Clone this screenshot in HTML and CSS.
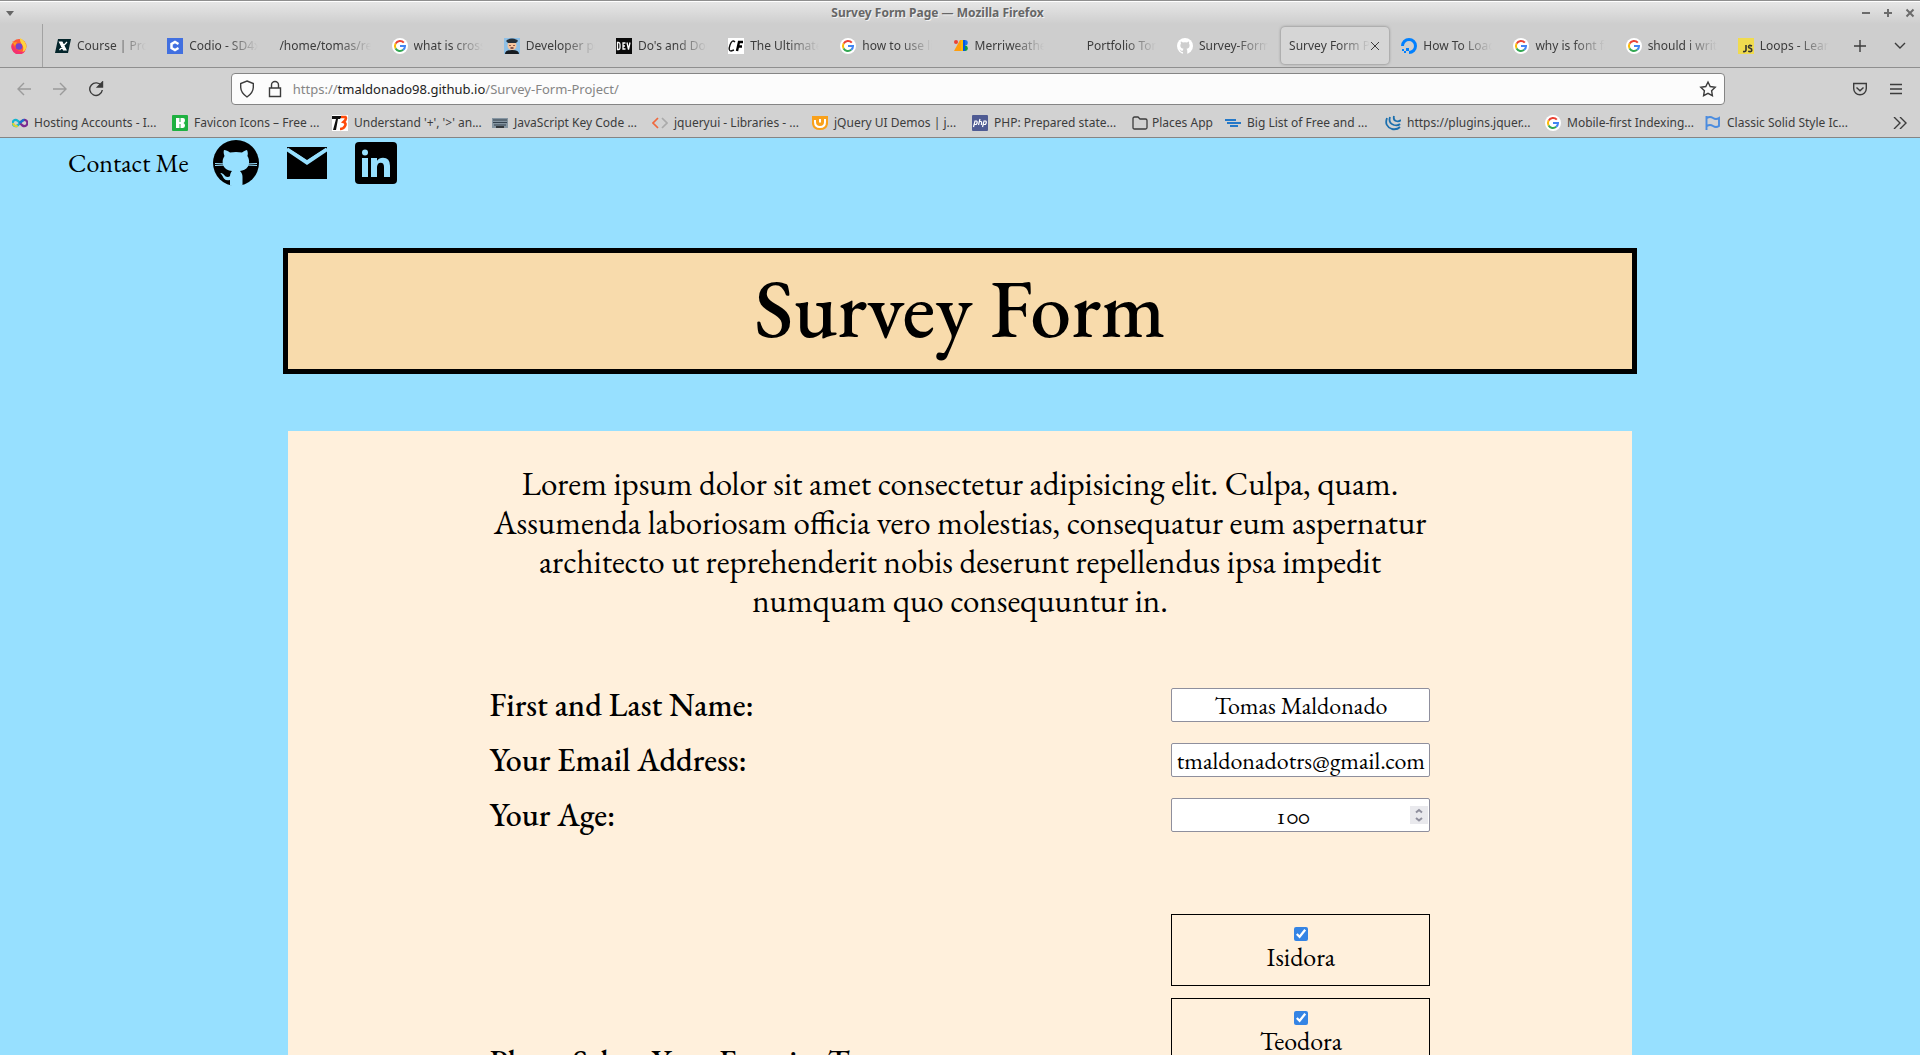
FILE: index.html
```html
<!DOCTYPE html>
<html lang="en">
<head>
<meta charset="utf-8">
<title>Survey Form Page</title>
<link rel="stylesheet" href="styles.css">
</head>
<body>
<svg class="defs" width="0" height="0" aria-hidden="true">
  <symbol id="google" viewBox="0 0 16 16"><circle cx="8" cy="8" r="8" fill="#fff"/><g fill="none" stroke-width="2"><path d="M11.8 4.7A5 5 0 0 0 3.6 5.6" stroke="#ea4335"/><path d="M3.6 5.6a5 5 0 0 0 0 4.9" stroke="#fbbc05"/><path d="M3.6 10.5a5 5 0 0 0 7.6 1.3" stroke="#34a853"/><path d="M8 8.1h5a5 5 0 0 1-1.8 3.7" stroke="#4285f4"/></g></symbol>
  <symbol id="cat" viewBox="0 0 46 46"><path d="M11 10c2 0 4 1 6 2.600q6-1.300 12 0c2-1.600 4-2.600 5-2.600q1.400 3 .4 6c2 3 2.300 7 .6 10.500-2 3-5 4-8 4.500 2 2 2.500 4 2.500 6v8.500q-6 2-12.500 0V40c-5 1-6-1-7.500-4-.8-1.500-1.800-2-2-3 3-.5 4 4 7 4q2 0 2.500-1c.2-2 .8-4 2-5-4-.5-7-2-8.500-5-1.500-3.500-1-7 1-10q-1.400-3-.5-6z"/></symbol>
</svg>
<header class="browser">
  <div class="titlebar">
    <span class="window-menu"></span>
    <span class="window-title">Survey Form Page — Mozilla Firefox</span>
    <span class="window-buttons">
      <button aria-label="Minimize"><svg width="10" height="10"><path d="M1 5h8"/></svg></button>
      <button aria-label="Maximize"><svg width="10" height="10"><path d="M1 5h8M5 1v8"/></svg></button>
      <button aria-label="Close"><svg width="10" height="10"><path d="M1.500 1.500l7 7M8.500 1.500l-7 7"/></svg></button>
    </span>
  </div>
  <div class="tabbar">
    <button class="pinned" aria-label="Firefox View"><svg width="16" height="16" viewBox="0 0 16 16"><circle cx="8" cy="8.500" r="7.500" fill="#ff5a36"/><path d="M1 6a7.500 7.500 0 0 0 13.500 6.500Q8 17 1 6z" fill="#f5316f"/><path d="M9 0q6 3 6.500 9-1 4-4 5 2-5-1-8-2-3-1.500-6z" fill="#ffd43c"/><path d="M1 3l2 1.500L6 4 4 8z" fill="#ff9a24"/><circle cx="8" cy="8.500" r="3.300" fill="#7442cf"/></svg></button>
    <nav class="tabs">
      <button class="tab"><svg class="icon" viewBox="0 0 16 16"><path d="M3 1h13l-3 14H0z" fill="#04252b"/><path d="M4.500 4H7l4 8H8.500zM12 4L4.500 12" fill="#fff" stroke="#fff" stroke-width="1.200"/></svg><span>Course | Proje</span></button>
      <button class="tab"><svg class="icon" viewBox="0 0 16 16"><path d="M0 0h16v16H0z" fill="#4270e0"/><path d="M11.500 6L8 4 4.500 6v4L8 12l3.500-2" fill="none" stroke="#fff" stroke-width="2.500"/></svg><span>Codio - SD4x</span></button>
      <button class="tab"><span>/home/tomas/repos</span></button>
      <button class="tab"><svg class="icon"><use href="#google"/></svg><span>what is cross</span></button>
      <button class="tab"><svg class="icon" viewBox="0 0 16 16"><path d="M0 0h16v16H0z" fill="#8fc0e6"/><circle cx="8" cy="7.500" r="4.500" fill="#f5c59d"/><path d="M2 3q1-2 6-2.500Q13 1 14 3l-2 2H4z" fill="#25303a"/><path d="M1 16q0-4 7-4t7 4z" fill="#161b20"/><path d="M6 7v1M10 7v1M6.500 10h3" stroke="#633"/></svg><span>Developer portf</span></button>
      <button class="tab"><svg class="icon" viewBox="0 0 16 16"><path d="M0 0h16v16H0z" fill="#0a0a0a"/><path d="M1.500 4.500v7h1q1.500 0 1.500-2v-3q0-2-1.500-2zM9.500 5H7v6h2.500M7 8h2M11 4.500l1.500 7 1.500-7" fill="none" stroke="#fff" stroke-width="1.300"/></svg><span>Do's and Don'ts</span></button>
      <button class="tab"><svg class="icon" viewBox="0 0 16 16"><path d="M0 0h16v16H0z" fill="#fff"/><path d="M7 4Q4 1 2 7t1 6l3-1" fill="none" stroke="#111"/><path d="M9 13l2-9h4M10 8.500h4" fill="none" stroke="#000" stroke-width="2.400"/></svg><span>The Ultimate G</span></button>
      <button class="tab"><svg class="icon"><use href="#google"/></svg><span>how to use link</span></button>
      <button class="tab"><svg class="icon" viewBox="0 0 16 16"><circle cx="3" cy="4" r="2" fill="#ea4335"/><path d="M7 2h3v11H1z" fill="#ff9e0d"/><path d="M8 2h2v11H8z" fill="#fbbc05"/><path d="M10 2h2v11h-2z" fill="#0057e5"/><path d="M12 2a2.700 2.700 0 0 1 0 5.500z" fill="#1a73e8"/><path d="M12 7.500a2.700 2.700 0 0 1 0 5.500z" fill="#0a9b42"/></svg><span>Merriweather</span></button>
      <button class="tab"><svg class="icon" viewBox="0 0 16 16"></svg><span>Portfolio Tomas</span></button>
      <button class="tab"><svg class="icon" viewBox="0 0 46 46"><circle cx="23" cy="23" r="23" fill="#fff"/><use href="#cat" fill="#cecece"/></svg><span>Survey-Form-P</span></button>
      <button class="tab active"><span>Survey Form Page</span><svg class="close" width="10" height="10"><path d="M1 1l8 8M9 1L1 9"/></svg></button>
      <button class="tab"><svg class="icon" viewBox="0 0 16 16"><path d="M8 14.500A6.500 6.500 0 1 0 1.500 8" fill="none" stroke="#0080ff" stroke-width="3"/><path d="M5 10h3v3H5zM3 13h2v2H3zM1 11h2v2H1z" fill="#0080ff"/></svg><span>How To Load C</span></button>
      <button class="tab"><svg class="icon"><use href="#google"/></svg><span>why is font fam</span></button>
      <button class="tab"><svg class="icon"><use href="#google"/></svg><span>should i write</span></button>
      <button class="tab"><svg class="icon" viewBox="0 0 16 16"><path d="M0 0h16v16H0z" fill="#f0db4f"/><path d="M8 7v5q0 2-3 1.500M14 8q-3.500-1.500-3.500.7 0 1.300 1.700 1.600 1.800.4 1.600 2-.4 2-3.600.9" fill="none" stroke="#323330" stroke-width="1.600"/></svg><span>Loops - Learn J</span></button>
    </nav>
    <button class="tab-tool" aria-label="New tab"><svg width="12" height="12"><path d="M6 0v12M0 6h12"/></svg></button>
    <button class="tab-tool" aria-label="List all tabs"><svg width="12" height="8"><path d="M1 1l5 5 5-5"/></svg></button>
  </div>
  <div class="navbar">
    <button class="tool dim" aria-label="Back"><svg width="16" height="16"><path d="M15 8H2M8 2L2 8l6 6"/></svg></button>
    <button class="tool dim" aria-label="Forward"><svg width="16" height="16"><path d="M1 8h13M8 2l6 6-6 6"/></svg></button>
    <button class="tool" aria-label="Reload"><svg width="16" height="16"><path d="M13.500 5A6.300 6.300 0 1 0 14.300 9"/><path d="M14.500 1v5h-5z" fill="#3c3c3c"/></svg></button>
    <span class="spacer"></span>
    <div class="urlbar">
      <svg width="16" height="18"><path d="M8 1l6.300 2.500v4Q14 13 8 17 2 13 1.700 7.500v-4z"/></svg>
      <svg width="14" height="18"><path d="M1.500 8h11v8.500h-11zM3.500 8V5a3.500 3.500 0 0 1 7 0v3"/></svg>
      <span class="url">https://<b>tmaldonado98.github.io</b>/Survey-Form-Project/</span>
      <svg width="18" height="18"><path d="M9 2l2.200 4.500 5 .7-3.600 3.500.8 5L9 13.300l-4.400 2.400.8-5L1.800 7.200l5-.7z"/></svg>
    </div>
    <span class="spacer"></span>
    <button class="tool" aria-label="Save to Pocket"><svg width="16" height="16"><path d="M1.700 2.500h12.600v5a6.300 6.300 0 0 1-12.600 0zM4.500 6.500L8 9.800l3.500-3.300"/></svg></button>
    <button class="tool" aria-label="Menu"><svg width="12" height="12"><path d="M0 1.500h12M0 6h12M0 10.500h12"/></svg></button>
  </div>
  <nav class="bookmarks">
    <a href="#"><svg class="icon" viewBox="0 0 16 16"><g fill="none" stroke-width="2.200"><path d="M8 8Q5.500 4.800 3.800 4.800A3 3 0 0 0 3.800 11.200Q5.500 11.200 8 8" stroke="#12b5cf"/><path d="M1.200 8a3 3 0 0 0 4.500 2.700" stroke="#d9d534"/><path d="M8 8q2.500-3.200 4.200-3.200a3 3 0 0 1 0 6.400Q10.500 11.200 8 8" stroke="#7b2b91"/><path d="M8 8q2.500-3.200 4.200-3.200" stroke="#1575cf"/></g></svg><span>Hosting Accounts - I...</span></a>
    <a href="#"><svg class="icon" viewBox="0 0 16 16"><rect width="16" height="16" rx="1" fill="#1fb141"/><path d="M4 3h3.500v10H4zM8.500 3H11q2 0 2 2.200T11.500 8q1.500.5 1.500 2.500t-2 2.500H8.500V9H7V7h1.500z" fill="#fff"/></svg><span>Favicon Icons – Free ...</span></a>
    <a href="#"><svg class="icon" viewBox="0 0 16 16"><path d="M0 0h16v16H0z" fill="#fff"/><path d="M0 1h10L8 4H6L4 15H1L4 4H0z" fill="#111"/><path d="M9 2h4.500q1.500 2-2 5 3 1 1.500 4t-5 3" fill="none" stroke="#ff4a0a" stroke-width="2.600"/></svg><span>Understand '+', '&gt;' an...</span></a>
    <a href="#"><svg class="icon" viewBox="0 0 16 16"><path d="M0 3h16v10H0z" fill="#8696a2"/><path d="M1 5h14M1 7.500h14M2 10h12" stroke="#34424e" stroke-width="1.200"/><path d="M4 12h8" stroke="#111"/></svg><span>JavaScript Key Code ...</span></a>
    <a href="#"><svg class="icon" viewBox="0 0 16 16"><path d="M6 3L1 8l5 5" fill="none" stroke="#f0683c" stroke-width="1.700"/><path d="M10 3l5 5-5 5" fill="none" stroke="#aaa" stroke-width="1.700"/></svg><span>jqueryui - Libraries - ...</span></a>
    <a href="#"><svg class="icon" viewBox="0 0 16 16"><path d="M0 1h16v8q-1 6-8 6T0 9z" fill="#f9a11b"/><path d="M3 5v2q0 5 5 5t5-5V4M8 4v3.500" fill="none" stroke="#fff" stroke-width="2"/></svg><span>jQuery UI Demos | j...</span></a>
    <a href="#"><svg class="icon" viewBox="0 0 16 16"><rect width="16" height="16" rx="1" fill="#4f5b93"/><path d="M1.500 12L3 6h1.500q1.500 1-.2 3.500H2.500M6.500 10L8 4M7.500 6.500h1.500q1 0 .3 3.500M10.500 12L12 6h1.700q1.300 1-.2 3.500h-2" fill="none" stroke="#fff" stroke-width="1.200"/></svg><span>PHP: Prepared state...</span></a>
    <a class="folder" href="#"><svg class="icon" viewBox="0 0 16 16"><path d="M1 3.500q0-1.500 1.500-1.500h3.500l2 2h5.500q1.500 0 1.500 1.500v7q0 1.500-1.500 1.500h-11q-1.500 0-1.500-1.500z" fill="none" stroke="#3c3c3c" stroke-width="1.300"/></svg><span>Places App</span></a>
    <a href="#"><svg class="icon" viewBox="0 0 16 16"><path d="M0 5h11M2 8h14M5 11h8" stroke="#2478c8" stroke-width="2.200"/></svg><span>Big List of Free and ...</span></a>
    <a href="#"><svg class="icon" viewBox="0 0 16 16"><path d="M2 3q-3 8 5 11 5 1 8-2M5 2q-2 6 4 8 4 1 6-1M9 1q-1 4 2 5 3 1 5-1" fill="none" stroke="#1b6fae" stroke-width="1.800"/></svg><span>https://plugins.jquer...</span></a>
    <a href="#"><svg class="icon"><use href="#google"/></svg><span>Mobile-first Indexing...</span></a>
    <a href="#"><svg class="icon" viewBox="0 0 16 16"><path d="M1.500 1v14M2 3q3-2 6 0t6 0v8q-3 2-6 0t-6 0" fill="none" stroke="#4b8cdf" stroke-width="1.900"/></svg><span>Classic Solid Style Ic...</span></a>
    <button class="tab-tool" aria-label="More bookmarks"><svg width="14" height="12"><path d="M1 0l6 6-6 6M7 0l6 6-6 6"/></svg></button>
  </nav>
</header>
<main class="page">
  <nav class="contact">
    <span>Contact Me</span>
    <a href="#" aria-label="GitHub"><svg width="46" height="46" viewBox="0 0 46 46"><circle cx="23" cy="23" r="23"/><use href="#cat" fill="#97e0ff"/><path d="M2 23.500l12 .5M2 25.500l12-.5M44 23.500l-12 .5M44 25.500l-12-.5" stroke="#97e0ff" stroke-width="1"/></svg></a>
    <a href="#" aria-label="Email"><svg width="48" height="48" viewBox="0 0 48 48"><path d="M4 8h40v32H4z"/><path d="M4 10l20 13.500L44 10" fill="none" stroke="#97e0ff" stroke-width="4"/><path d="M4 8h40l-20 12.500z"/></svg></a>
    <a href="#" aria-label="LinkedIn"><svg width="42" height="42" viewBox="0 0 42 42"><rect width="42" height="42" rx="4"/><g fill="#97e0ff"><circle cx="10" cy="10.500" r="3"/><path d="M7 16h6v19H7zM16 16h6v2.800Q24 15.700 28 15.700q7 0 7 8V35h-6V25q0-4.300-3.300-4.300T22 25v10h-6z"/></g></svg></a>
  </nav>
  <h1 class="title">Survey Form</h1>
  <form class="card">
    <p class="intro">Lorem ipsum dolor sit amet consectetur adipisicing elit. Culpa, quam. Assumenda laboriosam officia vero molestias, consequatur eum aspernatur architecto ut reprehenderit nobis deserunt repellendus ipsa impedit numquam quo consequuntur in.</p>
    <div class="row"><label for="name">First and Last Name:</label><input class="field" id="name" type="text" value="Tomas Maldonado"></div>
    <div class="row"><label for="email">Your Email Address:</label><input class="field" id="email" type="email" value="tmaldonadotrs@gmail.com"></div>
    <div class="row"><label for="age">Your Age:</label><div class="number"><input class="field" id="age" type="number" value="100"><svg class="spinner" width="18" height="18"><path d="M6 6.500L9 4l3 2.500M6 12l3 2.500 3-2.500"/></svg></div></div>
    <div class="row choices">
      <span class="question" id="question">Please Select Your Favorite Team:</span>
      <div class="options" role="group" aria-labelledby="question">
        <label class="option"><input type="checkbox" checked>Isidora</label>
        <label class="option"><input type="checkbox" checked>Teodora</label>
      </div>
    </div>
  </form>
</main>
</body>
</html>
```

FILE: styles.css
```css
* { box-sizing: border-box; }
body { margin: 0; height: 100vh; display: flex; flex-direction: column; overflow: hidden; color: #000; font-family: "EB Garamond", "Liberation Serif", serif; }
button { font: inherit; color: inherit; background: none; border: 0; padding: 0; display: flex; align-items: center; justify-content: center; }
.defs { position: absolute; }

/* browser window */
.browser { flex: none; font: 12px/16px "Noto Sans", sans-serif; color: #3c3c3c; background: #d2d2d2; border-top: 1px solid #8f8f8f; border-bottom: 1px solid #858585; }
.browser svg { flex: none; fill: none; stroke: #3c3c3c; stroke-width: 1.4; }
.browser .icon, .pinned svg { width: 16px; height: 16px; stroke: none; }
.titlebar { height: 23px; padding: 0 5px 0 6px; display: grid; grid-template-columns: 60px 1fr 60px; align-items: center; border-top: 1px solid #fff; background: linear-gradient(#e6e6e6, #cecece); }
.window-menu { width: 8px; border: 4px solid transparent; border-top: 5px solid #666; border-bottom: 0; }
.window-title { padding-right: 46px; text-align: center; font-weight: bold; color: #666; text-shadow: 1px 1px #f2f2f2; }
.window-buttons { display: flex; justify-content: flex-end; gap: 12px; }
.window-buttons svg { stroke: #6b6b6b; stroke-width: 2; }
.tabbar { height: 44px; display: flex; background: #cecece; border-bottom: 1px solid #8f8f8f; }
.pinned { width: 43px; padding-right: 4px; border-right: 1px solid #a2a2a2; }
.tabs { flex: 1; min-width: 0; padding-left: 2px; display: flex; }
.tab { flex: 1 1 0; min-width: 0; margin: 3px 2px; padding: 0 9px 0 8px; gap: 6px; border-radius: 4px; }
.tab span { flex: 1; min-width: 0; overflow: hidden; white-space: nowrap; text-align: left; -webkit-mask-image: linear-gradient(to left, transparent, #000 32px); mask-image: linear-gradient(to left, transparent, #000 32px); }
.tab.active { gap: 0; background: #d6d6d6; box-shadow: 0 0 3px #777; }
.browser .close { stroke-width: 1; }
.tab-tool { width: 40px; flex: none; }
.navbar { height: 41px; padding: 0 6px; display: flex; align-items: center; }
.tool { width: 36px; height: 36px; flex: none; }
.browser .dim svg { stroke: #9b9b9b; }
.spacer { flex: 118 1 0; }
.urlbar { flex: 1494 1 0; height: 32px; padding: 0 7px; display: flex; align-items: center; gap: 13px; background: #fcfcfc; border: 1px solid #858585; border-radius: 4px; }
.url { flex: 1; margin-left: -2px; font-size: 13px; color: #858585; }
.url b { font-weight: normal; color: #222; }
.bookmarks { height: 28px; padding-left: 12px; display: flex; align-items: center; }
.bookmarks a { width: 160px; display: flex; align-items: center; gap: 6px; color: inherit; text-decoration: none; white-space: nowrap; }
.bookmarks .folder { width: 93px; gap: 4px; }
.bookmarks .tab-tool { margin-left: auto; }

/* survey page */
.page { flex: 1; min-height: 0; overflow: hidden; background: #97e0ff; }
.contact { height: 50px; padding-left: 68px; display: flex; align-items: center; gap: 24px; font-size: 26px; line-height: 32px; }
.contact a { display: flex; }
.title { width: fit-content; min-width: calc(70% + 10px); margin: 60px auto 57px; padding: 7px 0 13px; border: 5px solid #000; background: #f8dbac; text-align: center; font-size: 82px; font-weight: 500; line-height: 96px; }
.card { width: 70%; min-height: 100%; margin: 0 auto; padding: 33px 10.5% 0; background: #fff0dc; }
.intro { margin: 0 0 68px; text-align: center; font-size: 33px; line-height: 39px; }
.row { display: flex; justify-content: space-between; align-items: center; height: 34px; margin-bottom: 21px; font-size: 32px; font-weight: 500; line-height: 39px; }
.field { width: 259px; height: 34px; padding: 1px; font: 24px/28px "EB Garamond", "Liberation Serif", serif; font-variant-numeric: oldstyle-nums; text-align: center; color: #000; background: #fff; border: 1px solid #8f8f9d; border-radius: 2px; }
.number { position: relative; display: flex; }
.number .field { padding-right: 18px; appearance: textfield; -moz-appearance: textfield; }
.number .field::-webkit-inner-spin-button { appearance: none; margin: 0; }
.spinner { position: absolute; right: 2px; top: 8px; background: #e9e9ed; fill: none; stroke: #8f8f9d; stroke-width: 2; }
.choices { height: auto; margin: 82px 0 0; align-items: flex-end; }
.options { width: 259px; padding-bottom: 12px; display: grid; gap: 12px; }
.option { height: 72px; padding-top: 12px; display: flex; flex-direction: column; align-items: center; gap: 2px; border: 1px solid #000; font-size: 26px; font-weight: 400; line-height: 28px; }
.option input { width: 14px; height: 14px; margin: 0; accent-color: #3584e4; }
```
